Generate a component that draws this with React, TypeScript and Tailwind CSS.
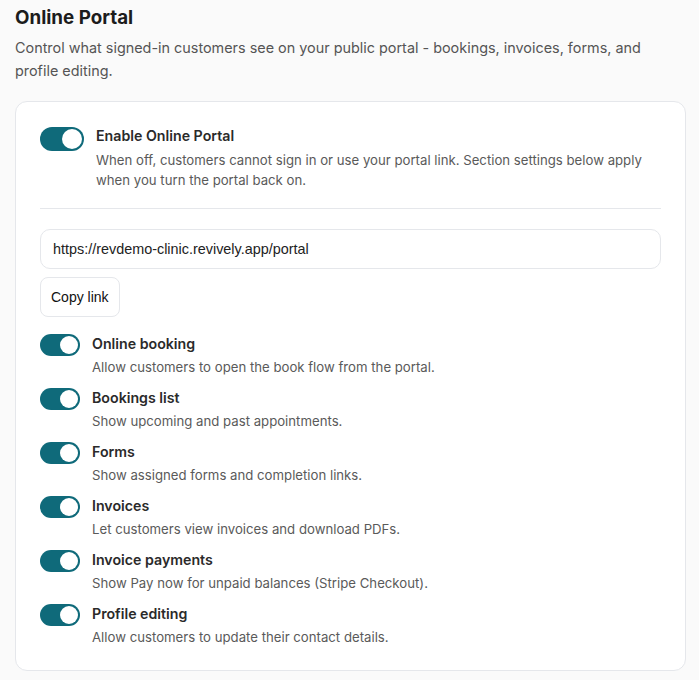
import React, { useState } from "react";

interface ToggleProps {
  on: boolean;
  onChange: (v: boolean) => void;
  size?: "md" | "sm";
}

function Toggle({ on, onChange, size = "sm" }: ToggleProps) {
  const md = size === "md";
  return (
    <button
      type="button"
      role="switch"
      aria-checked={on}
      onClick={() => onChange(!on)}
      className={
        md
          ? `relative shrink-0 inline-flex items-center rounded-full w-[44px] h-[24px] p-[2px] transition-colors ${on ? "bg-[#0f6a7a] justify-end" : "bg-zinc-300 justify-start"}`
          : `relative shrink-0 inline-flex items-center rounded-full w-[40px] h-[22px] p-[2px] transition-colors ${on ? "bg-[#0f6a7a] justify-end" : "bg-zinc-300 justify-start"}`
      }
    >
      <span
        className={
          md
            ? "block w-[20px] h-[20px] rounded-full bg-white"
            : "block w-[18px] h-[18px] rounded-full bg-white"
        }
      />
    </button>
  );
}

const sections = [
  { key: "booking", title: "Online booking", desc: "Allow customers to open the book flow from the portal." },
  { key: "bookings", title: "Bookings list", desc: "Show upcoming and past appointments." },
  { key: "forms", title: "Forms", desc: "Show assigned forms and completion links." },
  { key: "invoices", title: "Invoices", desc: "Let customers view invoices and download PDFs." },
  { key: "payments", title: "Invoice payments", desc: "Show Pay now for unpaid balances (Stripe Checkout)." },
  { key: "profile", title: "Profile editing", desc: "Allow customers to update their contact details." },
];

export default function App() {
  const [enabled, setEnabled] = useState(true);
  const [flags, setFlags] = useState<Record<string, boolean>>(
    Object.fromEntries(sections.map((s) => [s.key, true]))
  );

  return (
    <div className="min-h-[680px] bg-[#fafafa] px-[15px] pt-[4px] pb-4 font-['Inter',sans-serif]">
      <h2 className="text-[18.8px] leading-7 font-bold text-[#1c1c1c]">Online Portal</h2>
      <p className="mt-1 text-[14.4px] leading-[23px] text-[#555]">
        Control what signed-in customers see on your public portal - bookings, invoices, forms, and
        profile editing.
      </p>

      <div className="mt-[19px] w-[671px] rounded-xl border border-[#e5e7eb] bg-white px-6 pt-6 pb-[23px]">
        <div className="flex items-start gap-3">
          <div className="mt-[1px]">
            <Toggle size="md" on={enabled} onChange={setEnabled} />
          </div>
          <div>
            <div className="text-[14.2px] leading-5 font-semibold text-[#2a2a2a]">Enable Online Portal</div>
            <p className="mt-1 text-[13.2px] leading-5 text-[#5a5a5a]">
              When off, customers cannot sign in or use your portal link. Section settings below apply
              when you turn the portal back on.
            </p>
          </div>
        </div>

        <div className="mt-[18px] border-t border-[#e5e7eb]" />

        <input
          readOnly
          value="https://revdemo-clinic.revively.app/portal"
          className="mt-5 block w-full h-10 rounded-[10px] border border-[#e5e7eb] bg-white px-3 text-[14.4px] text-[#222] font-['Liberation_Sans',Arial,sans-serif] outline-none"
        />
        <button
          type="button"
          className="mt-2 h-10 rounded-lg border border-[#e5e7eb] bg-white px-[10px] text-sm text-[#111] font-['Liberation_Sans',Arial,sans-serif]"
        >
          Copy link
        </button>

        <div className="mt-[17px] flex flex-col gap-[11px]">
          {sections.map((s) => (
            <div key={s.key} className="flex items-start gap-3">
              <Toggle
                on={flags[s.key]}
                onChange={(v) => setFlags((f) => ({ ...f, [s.key]: v }))}
              />
              <div>
                <div className="text-[14.2px] leading-5 font-semibold text-[#2a2a2a]">{s.title}</div>
                <p className="mt-[3px] text-[13.2px] leading-5 text-[#5a5a5a]">{s.desc}</p>
              </div>
            </div>
          ))}
        </div>
      </div>
    </div>
  );
}
